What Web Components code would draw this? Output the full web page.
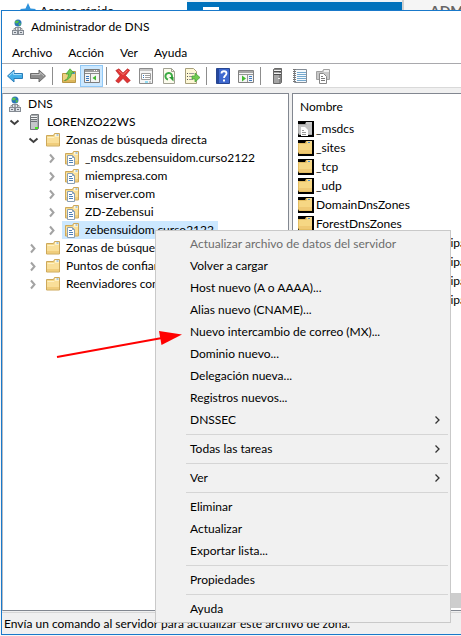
<!DOCTYPE html>
<html lang="es">
<head>
<meta charset="utf-8">
<meta name="viewport" content="width=device-width, initial-scale=1">
<title>Administrador de DNS</title>
<style>
html, body { margin: 0; height: 100%; }
body { background: #fff; color: #000; font: 12px/18px Lato, "Open Sans", sans-serif; overflow: hidden; }
</style>
</head>
<body>
<dns-desktop>
  <back-strip slot="back"></back-strip>
  <dns-window heading="Administrador de DNS">
    <menu-bar slot="bars" items="Archivo,Acción,Ver,Ayuda"></menu-bar>
    <tool-bar slot="bars"></tool-bar>
    <dns-tree slot="tree">
      <tree-item level="0" icon="dns">DNS</tree-item>
      <tree-item level="1" icon="server" state="open">LORENZO22WS</tree-item>
      <tree-item level="2" icon="folder" state="open">Zonas de búsqueda directa</tree-item>
      <tree-item level="3" icon="zone" state="closed">_msdcs.zebensuidom.curso2122</tree-item>
      <tree-item level="3" icon="zone" state="closed">miempresa.com</tree-item>
      <tree-item level="3" icon="zone" state="closed">miserver.com</tree-item>
      <tree-item level="3" icon="zone" state="closed">ZD-Zebensui</tree-item>
      <tree-item level="3" icon="zone" state="closed" selected>zebensuidom.curso2122</tree-item>
      <tree-item level="2" icon="folder" state="closed">Zonas de búsqueda inversa</tree-item>
      <tree-item level="2" icon="folder" state="closed">Puntos de confianza</tree-item>
      <tree-item level="2" icon="folder" state="closed">Reenviadores condicionales</tree-item>
    </dns-tree>
    <record-list slot="list"></record-list>
    <span slot="status">Envía un comando al servidor para actualizar este archivo de zona.</span>
  </dns-window>
  <context-menu slot="over">
    <menu-entry disabled>Actualizar archivo de datos del servidor</menu-entry>
    <menu-entry>Volver a cargar</menu-entry>
    <menu-entry>Host nuevo (A o AAAA)...</menu-entry>
    <menu-entry>Alias nuevo (CNAME)...</menu-entry>
    <menu-entry>Nuevo intercambio de correo (MX)...</menu-entry>
    <menu-entry>Dominio nuevo...</menu-entry>
    <menu-entry>Delegación nueva...</menu-entry>
    <menu-entry>Registros nuevos...</menu-entry>
    <menu-entry submenu>DNSSEC</menu-entry>
    <menu-line></menu-line>
    <menu-entry submenu>Todas las tareas</menu-entry>
    <menu-line></menu-line>
    <menu-entry submenu>Ver</menu-entry>
    <menu-line></menu-line>
    <menu-entry>Eliminar</menu-entry>
    <menu-entry>Actualizar</menu-entry>
    <menu-entry>Exportar lista...</menu-entry>
    <menu-line></menu-line>
    <menu-entry>Propiedades</menu-entry>
    <menu-line></menu-line>
    <menu-entry>Ayuda</menu-entry>
  </context-menu>
  <red-arrow slot="over"></red-arrow>
</dns-desktop>

<script>
const folderShape = `
  <path d="M1.500 3.500h7l1-2h5v12.500h-13z" fill="#f5d98a" stroke="#cda85a"/>
  <path d="M10 2h4v2h-4z" fill="#fff6da"/><path d="M11.500 2.500h2v1h-2z" fill="#5b9bd5"/>
  <path d="M2 5h7l1-1h4v9H2z" fill="#f9df99"/><path d="M2.500 5.500h6.500l1-1h4" fill="none" stroke="#fdf0c4"/>
  <path d="M2 11h12v2H2z" fill="#f0cd7c"/>`;
const ICONS = {
  dns: `<circle cx="8" cy="4" r="3.500" fill="#2b76b8"/><path d="M6 1.500l3 .5-1 2-2 .5-1.200-1.500zM9 4l2 .5-1 2.300-1.500-.8z" fill="#58c24a"/>
    <path d="M8 7.500v2M4 11V9.500h8V11" stroke="#999" fill="none"/>
    <rect x="5.500" y="8.500" width="5" height="3" fill="#e3e6ea" stroke="#8d9299"/>
    <rect x="2.500" y="11.500" width="5" height="4" fill="#dde1e6" stroke="#858b93"/><rect x="8.500" y="11.500" width="5" height="4" fill="#dde1e6" stroke="#858b93"/>
    <path d="M4 13.500h2M10 13.500h2M7 10h2" stroke="#6d747c"/>`,
  server: `<path d="M4.500 1.500l1-1h7v14l-1 1h-7z" fill="#a9adb0" stroke="#74797d"/><path d="M5 2h6v13H5z" fill="#c4c7c9"/>
    <path d="M5 3.500h6M5 5.500h6M5 7.500h6" stroke="#6c7175"/><path d="M5 2.500h6M5 4.500h6" stroke="#f2f3f4"/><path d="M9 13h3v2H9z" fill="#45e620"/>`,
  serverGray: `<path d="M4.500 1.500l1-1h7v14l-1 1h-7z" fill="#858585" stroke="#696969"/><path d="M5 2h5v13H5z" fill="#a5a5a5"/>
    <path d="M5 3.500h7M5 6.500h7" stroke="#4c4c4c"/><path d="M5 2.500h7M5 5.500h7" stroke="#f1f1f1"/><path d="M9 10h2v1H9z" fill="#eee"/>`,
  folder: folderShape,
  zone: folderShape + `<path d="M3.500 5.500h5l2 2v8h-7z" fill="#fff" stroke="#8aa0b5"/><path d="M5 8.500h3M5 10.500h4M5 12.500h4" stroke="#4f81b5"/><path d="M8.500 5.500v2h2" fill="none" stroke="#8aa0b5"/>`,
  folderBlack: `<path d="M0 0h16v16H0z" fill="#000"/><path d="M0 3h7l1-2h6v13H1L0 12z" fill="#e4bd62"/><path d="M1 4h7l1-1h5v10H1z" fill="#f6d784"/>
    <path d="M9 1.500h5v1H9z" fill="#fff4cf"/><path d="M10 2h2v1h-2z" fill="#4b8fca"/><path d="M1 10h13v3H1z" fill="#efc974"/>`,
  zoneBlack: `<path d="M0 0h16v16H0z" fill="#000"/><path d="M0 3h7l1-2h6v13H1L0 12z" fill="#a9a9a9"/><path d="M1 4h7l1-1h5v10H1z" fill="#c4c4c4"/>
    <path d="M8 1.500h6v1H8z" fill="#eee"/><path d="M3 6h4l3 3v6H3z" fill="#fff"/><path d="M4 9.500h2M4 11.500h4M4 13.500h4" stroke="#999"/>`,
  back: `<path d="M.5 8L7 2v3.500h8.500v5H7V14z" fill="#43aee8" stroke="#2a7db8"/><path d="M2 8l4.500-4v2.500h8" fill="none" stroke="#a5dcfa"/>`,
  forward: `<path d="M15.500 8L9 2v3.500H.5v5H9V14z" fill="#8d8d8d" stroke="#6e6e6e"/><path d="M1.500 6.500H10V4.500l4 3.500" fill="none" stroke="#c2c2c2"/>`,
  up: `<path d="M1.500 5.500h7l1-2h5v11h-13z" fill="#ecd17f" stroke="#b89645"/><path d="M11 4h3v2h-3z" fill="#5b9bd5"/><path d="M2 12h12v2H2z" fill="#dcb65a"/>
    <path d="M3.500 12.500C6 12 7.500 9 7.500 6H5L9 .800 13 5h-2.500c0 4-3 7-7 7.500z" fill="#6fcb4f" stroke="#3f9c35" stroke-width=".7"/>`,
  panes: `<path d="M.5 1.500h15v13H.5z" fill="#f4f4f4" stroke="#7d7d7d"/><path d="M1 2h14v2H1z" fill="#9d9d9d"/><path d="M10 2.500h4" stroke="#fff" stroke-dasharray="1 1"/>
    <path d="M1 5.500h14M6.500 6v8" stroke="#8b8b8b"/><path d="M2 8.500h3M2 10.500h3M2 12.500h3" stroke="#3a79bf"/><path d="M12 7.500v5L8.500 10z" fill="#42b82f"/>`,
  remove: `<path d="M.8 2.500L4 .8 8 5l4.500-4.200 2.200 1.500L10.500 7.500l4.800 5-3 2.500L8 10.500 3.500 15l-2.800-2L5 7.800z" fill="#e03434" stroke="#b02020" stroke-width=".6"/><path d="M3.500 2.500l4.500 4 4.500-4" stroke="#f67b70" fill="none"/>`,
  props: `<path d="M1.500.5h13v15h-13z" fill="#f6f6f6" stroke="#8c8c8c"/><path d="M2 1h12v2H2z" fill="#c6c6c6"/><path d="M3.500 5.500h9v6h-9z" fill="#fff" stroke="#9c9c9c"/>
    <path d="M5 7.500h1M5 9.500h1" stroke="#3275bd"/><path d="M7 7.500h5M7 9.500h5" stroke="#a0a0a0"/><path d="M7 14h3" stroke="#35c3ee"/><path d="M11 14h2" stroke="#999"/>`,
  refresh: `<path d="M2.500.5h8l3 3v12h-11z" fill="#fcfbed" stroke="#a2a293"/><path d="M10.500.5v3h3" fill="none" stroke="#a2a293"/>
    <path d="M7 11.500A3.300 3.300 0 1 1 10.800 9.500" fill="none" stroke="#3cab45" stroke-width="2"/><path d="M8 9h4.500v4.500z" fill="#2b9a36"/>`,
  export: `<path d="M1.500.5h8l3 3v12h-11z" fill="#fdf7d5" stroke="#a69f7b"/><path d="M3 5.500h1M3 8.500h1M3 11.500h1" stroke="#555"/><path d="M5 5.500h5M5 8.500h4M5 11.500h4" stroke="#999"/>
    <path d="M8 8h3V5l5 4.500-5 4.500v-3H8z" fill="#6fcb4f" stroke="#3f9c35" stroke-width=".7"/>`,
  help: `<path d="M1.500.5h13v15h-13z" fill="#3e68cf" stroke="#284690"/><path d="M2 1h2v14H2z" fill="#24479d"/><path d="M6.500 5.500c0-3 5-3 5 0 0 2-2.500 2-2.500 4.500" fill="none" stroke="#fff" stroke-width="1.800"/><path d="M8 11.500h2v2H8z" fill="#fff"/>`,
  console: `<path d="M.5 2.500h15v12H.5z" fill="#f5f5f5" stroke="#818181"/><path d="M1 3h14v2H1z" fill="#a5a5a5"/><path d="M1 6.500h14M9.500 7v7" stroke="#969696"/>
    <path d="M4 7.500v6L8 10.500z" fill="#42b82f"/><path d="M11 8.500h3M11 10.500h3M11 12.500h3" stroke="#407cc0"/>`,
  notes: `<path d="M2.500 1.500h12v13h-12z" fill="#f5f9fc" stroke="#858d96"/><path d="M5 4.500h9M5 6.500h9M5 8.500h9M5 10.500h9M5 12.500h9" stroke="#75a9cf"/><path d="M2.500 1v14" stroke="#777" stroke-width="3" stroke-dasharray="1 1"/>`,
  copy: `<path d="M1.500 3.500h6l1-2h6v10h-13z" fill="#c8c8c8" stroke="#a0a0a0"/><path d="M9 2h5v2H9z" fill="#efefef"/><path d="M4.500 5.500h4l3 3v7h-7z" fill="#fff" stroke="#888"/><path d="M6 8.500h2M6 10.500h4M6 12.500h4" stroke="#777"/>`,
  right: `<path d="M6 4.500L9.500 8.500 6 12.500" fill="none" stroke="#a3a3a3" stroke-width="2"/>`,
  down: `<path d="M4.500 6.500L8.500 10 12.500 6.500" fill="none" stroke="#404040" stroke-width="2"/>`,
  sub: `<path d="M6.500 4.500L10 8l-3.500 3.500" fill="none" stroke="#333" stroke-width="1.300"/>`,
  star: `<path d="M8 0l2.500 5.500L16 6l-4 4 1 6-5-3-5 3 1-6-4-4 5.500-.5z" fill="#2f93dc"/>`
};

function define(name, html, setup) {
  const template = document.createElement('template');
  template.innerHTML = html;
  customElements.define(name, class extends HTMLElement {
    constructor() {
      super();
      this.attachShadow({ mode: 'open' }).append(template.content.cloneNode(true));
    }
    connectedCallback() {
      if (setup && !this.ready) { this.ready = true; setup(this, this.shadowRoot); }
    }
  });
}

define('ui-icon', `<style>:host{display:block;flex:none;width:16px;height:16px}svg{display:block}</style><svg width="16" height="16" viewBox="0 0 16 16" aria-hidden="true"></svg>`,
  (el, root) => { root.querySelector('svg').innerHTML = ICONS[el.getAttribute('name')] || ''; });

define('dns-desktop', `<style>
  :host{display:flex;flex-direction:column;height:100vh;position:relative;overflow:hidden;background:#f6f6f6}
  .main{flex:1;min-height:0;display:flex;padding:0 0 1px 1px}
  ::slotted(dns-window){flex:1;min-width:0}
  </style><slot name="back"></slot><div class="main"><slot></slot></div><slot name="over"></slot>`);

define('back-strip', `<style>
  :host{display:grid;grid-template-columns:187px 215px 1fr;height:10px;overflow:hidden;background:#fff;flex:none}
  .quick{display:flex;align-items:flex-start;gap:4px;padding:3px 0 0 20px}
  .quick span{line-height:16px}
  .blue{background:#0072bc;border-top:2px solid #eef3f7}
  .blue i{display:block;width:16px;height:3px;margin:5px 0 0 16px;background:#fff}
  .side{background:#f5f5f5;border-left:2px solid #d0d0d0;padding:3px 0 0 26px;font-weight:700;font-size:14px;line-height:16px;color:#666}
  </style><div class="quick"><ui-icon name="star"></ui-icon><span>Acceso rápido</span></div><div class="blue"><i></i></div><div class="side">ADM</div>`);

define('dns-window', `<style>
  :host{display:flex;flex-direction:column;background:#f0f0f0;border:1px solid #1979ca;border-right:0}
  header{display:flex;align-items:center;gap:5px;height:31px;padding-left:8px;background:#fff}
  h1{margin:0;font-size:12px;font-weight:400}
  .panes{flex:1;min-height:0;display:grid;grid-template-columns:287px minmax(0,1fr);gap:3px;padding-top:5px}
  .pane{background:#fff;border:1px solid #828790;overflow:hidden;min-width:0}
  .pane:last-child{border-right:0;display:flex;flex-direction:column;justify-content:space-between}
  .pane:first-child{border-left-color:#b8bcc4}
  .scroll{height:15px;background:#cdcdcd;margin-bottom:2px}
  footer{height:21px;margin-top:1px;border-top:1px solid #d7d7d7;padding-left:2px;line-height:22px;white-space:nowrap}
  </style><header><ui-icon name="dns"></ui-icon><h1></h1></header><slot name="bars"></slot>
  <main class="panes"><section class="pane"><slot name="tree"></slot></section><section class="pane"><slot name="list"></slot><div class="scroll"></div></section></main>
  <footer><slot name="status"></slot></footer>`,
  (el, root) => { root.querySelector('h1').textContent = el.getAttribute('heading'); });

define('menu-bar', `<style>
  :host{display:block;background:#fff}nav{display:flex;height:21px;padding-left:2px}
  button{font:inherit;color:inherit;border:0;background:none;padding:0 8px;line-height:20px}
  </style><nav role="menubar"></nav>`,
  (el, root) => {
    for (const text of el.getAttribute('items').split(',')) {
      const b = document.createElement('button');
      b.textContent = text; b.setAttribute('role', 'menuitem');
      root.querySelector('nav').append(b);
    }
  });

define('tool-button', `<style>
  :host{display:block}button{display:grid;place-items:center;width:23px;height:22px;padding:0;border:0;background:none}
  :host([pressed]) button{background:#cce8ff;border:1px solid #90c8f6}
  </style><button type="button"></button>`,
  (el, root) => {
    const icon = document.createElement('ui-icon');
    icon.setAttribute('name', el.getAttribute('name'));
    const b = root.querySelector('button');
    b.append(icon); b.setAttribute('aria-label', el.getAttribute('label'));
  });

define('tool-bar', `<style>
  :host{display:flex;align-items:flex-end;background:#fff;border-top:1px solid #a9a9ad;border-bottom:1px solid #d9d9d9;height:23px;padding-left:1px}
  i{width:1px;height:18px;margin:0 4px 2px 3px;background:#8d8d8d}
  </style>
  <tool-button name="back" label="Atrás"></tool-button><tool-button name="forward" label="Adelante"></tool-button><i></i>
  <tool-button name="up" label="Subir un nivel"></tool-button><tool-button name="panes" label="Mostrar árbol" pressed></tool-button><i></i>
  <tool-button name="remove" label="Eliminar"></tool-button><tool-button name="props" label="Propiedades"></tool-button><tool-button name="refresh" label="Actualizar"></tool-button><tool-button name="export" label="Exportar lista"></tool-button><i></i>
  <tool-button name="help" label="Ayuda"></tool-button><tool-button name="console" label="Panel de acciones"></tool-button><i></i>
  <tool-button name="serverGray" label="Servidor nuevo"></tool-button><tool-button name="notes" label="Registro"></tool-button><tool-button name="copy" label="Zona nueva"></tool-button>`);

define('dns-tree', `<style>:host{display:block;padding-top:1px}</style><div role="tree"><slot></slot></div>`);

define('tree-item', `<style>
  :host{display:flex;align-items:center;height:18px;padding-left:calc(2px + 19px * (var(--level) - 1))}
  :host([level="0"]){padding-left:2px}
  button{display:grid;place-items:center;width:18px;height:18px;margin-right:1px;padding:0;border:0;background:none}
  .label{display:flex;align-items:center;gap:5px;height:18px;padding:0 4px 0 2px;white-space:nowrap}
  :host([selected]) .label{background:#cce8ff}
  </style><button type="button"></button><span class="label"><span><slot></slot></span></span>`,
  (el, root) => {
    el.style.setProperty('--level', el.getAttribute('level'));
    el.setAttribute('role', 'treeitem');
    const make = name => { const i = document.createElement('ui-icon'); i.setAttribute('name', name); return i; };
    root.querySelector('.label').prepend(make(el.getAttribute('icon')));
    const b = root.querySelector('button'), state = el.getAttribute('state');
    if (!state) return b.remove();
    b.append(make(state === 'open' ? 'down' : 'right'));
    b.setAttribute('aria-label', state === 'open' ? 'Contraer' : 'Expandir');
  });

define('record-list', `<style>
  :host{display:block}table{border-collapse:collapse;width:100%}
  th{font-weight:400;text-align:left;height:25px;padding:0 0 0 7px}
  td{height:19px;padding:0 0 0 5px;white-space:nowrap}
  span{display:flex;align-items:center;gap:2px;height:19px}
  </style><table><thead><tr><th scope="col">Nombre</th></tr></thead><tbody></tbody></table>`,
  (el, root) => {
    const rows = [['zoneBlack', '_msdcs'], ['folderBlack', '_sites'], ['folderBlack', '_tcp'], ['folderBlack', '_udp'],
      ['folderBlack', 'DomainDnsZones'], ['folderBlack', 'ForestDnsZones'],
      ...Array(4).fill(['notes', '(igual que la carpeta principal)'])];
    root.querySelector('tbody').innerHTML = rows.map(([icon, text]) =>
      `<tr><td><span><ui-icon name="${icon}"></ui-icon>${text}</span></td></tr>`).join('');
  });

define('context-menu', `<style>
  :host{display:block;position:absolute;left:155px;top:230px;width:292px;padding:2px 1px;background:#f1f1f1;border:1px solid #c9c9c9}
  </style><div role="menu"><slot></slot></div>`);

define('menu-entry', `<style>
  :host{display:block}
  button{display:flex;align-items:center;justify-content:space-between;width:100%;height:22px;padding:0 4px 0 33px;border:0;background:none;font:inherit;color:#000;text-align:left;white-space:nowrap}
  button:disabled{color:#6d6d6d}
  </style><button type="button" role="menuitem"><span><slot></slot></span></button>`,
  (el, root) => {
    const b = root.querySelector('button');
    b.disabled = el.hasAttribute('disabled');
    if (el.hasAttribute('submenu')) {
      const i = document.createElement('ui-icon'); i.setAttribute('name', 'sub');
      b.append(i);
    }
  });

define('menu-line', `<style>:host{display:block;height:1px;margin:3px 1px 3px 29px;background:#d5d5d5}</style>`);

define('red-arrow', `<style>:host{display:block;position:absolute;left:56px;top:328px}svg{display:block}</style>
  <svg width="128" height="32" viewBox="0 0 128 32" aria-hidden="true"><path d="M1 29L106 10" stroke="#f00" stroke-width="2"/><path d="M103 3l23 3.500-20.500 10.500z" fill="#f00"/></svg>`);
</script>
</body>
</html>
